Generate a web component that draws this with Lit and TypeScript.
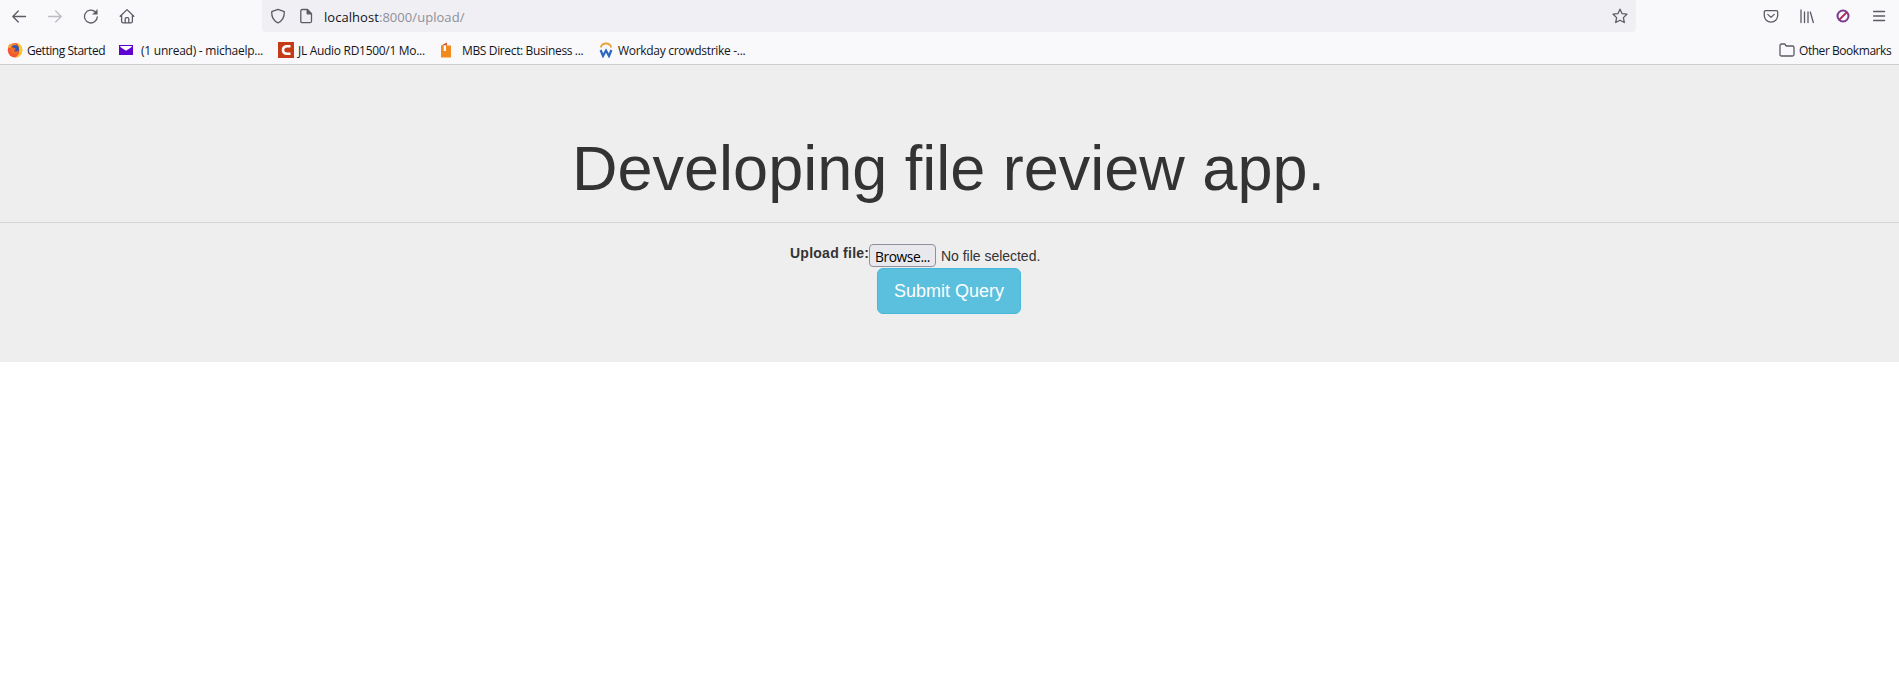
import { LitElement, html, css, svg } from "lit";
import { customElement } from "lit/decorators.js";

const stroke = (w: number, h: number, body: unknown) => html`<svg width=${w} height=${h} viewBox="0 0 ${w} ${h}" fill="none" stroke="#5b5b66" stroke-width="1.3" stroke-linecap="round" stroke-linejoin="round">${body}</svg>`;

const back = stroke(16, 16, svg`<path d="M14.5 8.5H1.8M7.3 3 1.8 8.5 7.3 14"/>`);
const forward = stroke(16, 16, svg`<path stroke="#bcbcc2" d="M1.5 8.5h12.7M8.7 3l5.500 5.500L8.700 14"/>`);
const reload = stroke(16, 16, svg`<path d="M14.3 8.9A6.4 6.4 0 1 1 12.4 4"/><path fill="#5b5b66" stroke-width=".5" d="M14.3 1.800v4.400H9.900z"/>`);
const home = stroke(16, 16, svg`<path d="M1.2 8.2 8 1.6l6.800 6.600M2.600 7v6.200q0 1.600 1.600 1.600h7.600q1.600 0 1.600-1.600V7M6.200 14.600v-3.800q0-1.200 1.200-1.200h1.200q1.200 0 1.200 1.200v3.800"/>`);
const shield = stroke(16, 16, svg`<path d="M8 1.300 14.300 3.600C14.500 9 12.400 13 8 14.900 3.600 13 1.500 9 1.700 3.600z"/>`);
const page = stroke(16, 16, svg`<path d="M2.800 3q0-1.500 1.500-1.500H9.400L13.500 5.600V13.200q0 1.500-1.500 1.500H4.300q-1.500 0-1.500-1.500z"/><path fill="#5b5b66" d="M9.200 1.800v4h4z"/>`);
const star = stroke(16, 16, svg`<path d="M8 1.200 10 5.600l4.900.6-3.500 3.400.9 4.900L8 12.200 3.700 14.500l.9-4.900L1.100 6.200 6 5.600z"/>`);
const pocket = stroke(16, 16, svg`<path d="M2.600 2.600H13.400q1.300 0 1.300 1.300V7.600A6.700 6.500 0 0 1 1.300 7.600V3.900q0-1.300 1.300-1.300zM4.800 6.400 8 9.400l3.200-3"/>`);
const library = stroke(16, 16, svg`<path d="M2 2v12.500M5.500 4v10.500M9 4v10.500M11.300 4l3 10.500"/>`);
const blocked = html`<svg width="16" height="16" viewBox="0 0 16 16" fill="none"><circle cx="8" cy="8" r="5.500" stroke="#7a3a90" stroke-width="2"/><path d="m4.500 11.500 7-7" stroke="#b02a5c" stroke-width="1.800"/></svg>`;
const menu = stroke(16, 16, svg`<path d="M2.600 3.500h11M2.600 8h11M2.600 12.500h11"/>`);
const folder = stroke(16, 16, svg`<path d="M1 12.500V3.500Q1 2 2.500 2H5.700L7.300 4H13.500Q15 4 15 5.500v7q0 1.500-1.500 1.500h-11Q1 14 1 12.500z"/>`);

const fox = html`<svg width="16" height="16" viewBox="0 0 16 16"><circle cx="8" cy="8.300" r="7.200" fill="#f5552f"/><path d="M10 .8q6.500 3 5.200 8.700-1.200 5.500-7 6 4.500-3 4-7.500-.4-4-2.200-7.200z" fill="#ffc928"/><path d="M1 6Q1 3 3 1.500l1 1.800q2-1.500 5-1.300L7 6z" fill="#ff9d2e"/><circle cx="8" cy="7" r="4" fill="#3456a8"/><path d="M3 6q2-1.500 4.500 0L9 7.200 7 8.600q1.500 2 4.500 0-.8 3.500-4 3.600Q3.500 12 3 6z" fill="#f2692d"/></svg>`;
const mail = html`<svg width="16" height="16" viewBox="0 0 16 16"><path d="M1 3h14v10H1z" fill="#5f01d1"/><path d="M2.300 4h11.400v1L8 8.800 2.300 5z" fill="#fff"/></svg>`;
const cIcon = html`<svg width="16" height="16" viewBox="0 0 16 16"><path d="M0 0h16v16H0z" fill="#c63b17"/><path d="M12.500 4.200H9.200Q5 4.200 5 8t4.200 3.800h3.300" fill="none" stroke="#fff" stroke-width="2.600"/></svg>`;
const book = html`<svg width="16" height="16" viewBox="0 0 16 16"><path d="M3 3.500h10V15.500H3z" fill="#f08a1d"/><path d="M3 3.500 9 .5v3H3z" fill="#d35a28"/><path d="M5.700 3.500h2.300v5.500H5.700z" fill="#fff"/></svg>`;
const work = html`<svg width="16" height="16" viewBox="0 0 16 16" fill="none"><path d="M2.700 5.500a5.500 5.500 0 0 1 10.600 0" stroke="#e9a23a" stroke-width="1.900"/><path d="m2.600 8 2.400 6L8 8.500l3 5.500 2.400-6" stroke="#2d66c0" stroke-width="2.200"/></svg>`;

@customElement("app-root")
export class AppRoot extends LitElement {
  static styles = css`
    :host { display: block; min-height: 691px; background: #fff; font-family: "Liberation Sans", Arial, sans-serif; }
    svg { display: block; flex: none; }
    .chrome { height: 64px; box-sizing: content-box; background: #f9f9fb; border-bottom: 1px solid #ccccce; font-family: "Open Sans", "Noto Sans", sans-serif; color: #15141a; }
    .nav { display: flex; height: 32px; align-items: center; }
    .tools { display: flex; gap: 20px; padding-left: 11px; width: 251px; }
    .url { display: flex; align-items: center; width: 1374px; height: 32px; box-sizing: border-box; background: #f0f0f4; border-radius: 0 0 4px 4px; padding: 0 8px; }
    .addr { margin-left: 10px; flex: 1; font-size: 13px; letter-spacing: .05px; white-space: nowrap; line-height: 18px; padding-top: 2px; }
    .dim { color: #8f8f98; }
    .page { margin-left: 12px; }
    .right { display: flex; gap: 20px; margin-left: auto; padding-right: 12px; }
    .marks { display: flex; height: 32px; align-items: center; padding: 4px 8px 0 7px; box-sizing: border-box; }
    .mark { display: flex; align-items: center; gap: 4px; font-size: 12px; letter-spacing: -.3px; white-space: nowrap; line-height: 16px; }
    .label { flex: 1; padding-top: 2px; }
    .m1 { width: 111px; letter-spacing: -.45px; }
    .m2 { width: 160px; gap: 7px; letter-spacing: -.25px; }
    .m3 { width: 160px; }
    .m4 { width: 160px; gap: 8px; letter-spacing: -.36px; }
    .m5 { width: 150px; }
    .other { margin-left: auto; width: 112px; letter-spacing: -.45px; }
    .jumbo { background: #eee; color: #333; height: 297px; box-sizing: border-box; padding-top: 69px; text-align: center; }
    h1 { margin: 0; font-size: 63px; line-height: 68.300px; font-weight: 500; padding-right: 2px; }
    hr { margin: 20px 0; border: 0; border-top: 1px solid #d5d5d5; }
    .row { display: flex; padding-left: 790px; height: 25px; font-size: 14px; line-height: 20px; }
    .row b { width: 79px; white-space: nowrap; text-align: left; letter-spacing: .25px; }
    .browse { width: 67px; height: 23px; margin-top: 1px; box-sizing: border-box; border: 1px solid #8f8f9d; border-radius: 4px; background: #e9e9ed; color: #000; font: 13.800px/21px "Open Sans", sans-serif; letter-spacing: -.4px; padding: 1px 0 0; }
    .none { margin-left: 5px; padding-top: 3px; font-size: 14px; letter-spacing: -.02px; }
    .submit { display: block; margin: 0 0 0 877px; width: 144px; height: 46px; font: 18px/24px "Liberation Sans", Arial, sans-serif; color: #fff; background: #5bc0de; border: 1px solid #46b8da; border-radius: 6px; padding: 0; }
  `;

  render() {
    return html`
      <header class="chrome">
        <div class="nav">
          <div class="tools">${back}${forward}${reload}${home}</div>
          <div class="url">${shield}<span class="page">${page}</span><span class="addr">localhost<span class="dim">:8000/upload/</span></span>${star}</div>
          <div class="right">${pocket}${library}${blocked}${menu}</div>
        </div>
        <div class="marks">
          <div class="mark m1">${fox}<span class="label">Getting Started</span></div>
          <div class="mark m2">${mail}<span class="label">(1 unread) - michaelp...</span></div>
          <div class="mark m3">${cIcon}<span class="label">JL Audio RD1500/1 Mo...</span></div>
          <div class="mark m4">${book}<span class="label">MBS Direct: Business ...</span></div>
          <div class="mark m5">${work}<span class="label">Workday crowdstrike -...</span></div>
          <div class="mark other">${folder}<span class="label">Other Bookmarks</span></div>
        </div>
      </header>
      <main class="jumbo">
        <h1>Developing file review app.</h1>
        <hr />
        <div class="row"><b>Upload file:</b><button class="browse">Browse...</button><span class="none">No file selected.</span></div>
        <button class="submit">Submit Query</button>
      </main>`;
  }
}
